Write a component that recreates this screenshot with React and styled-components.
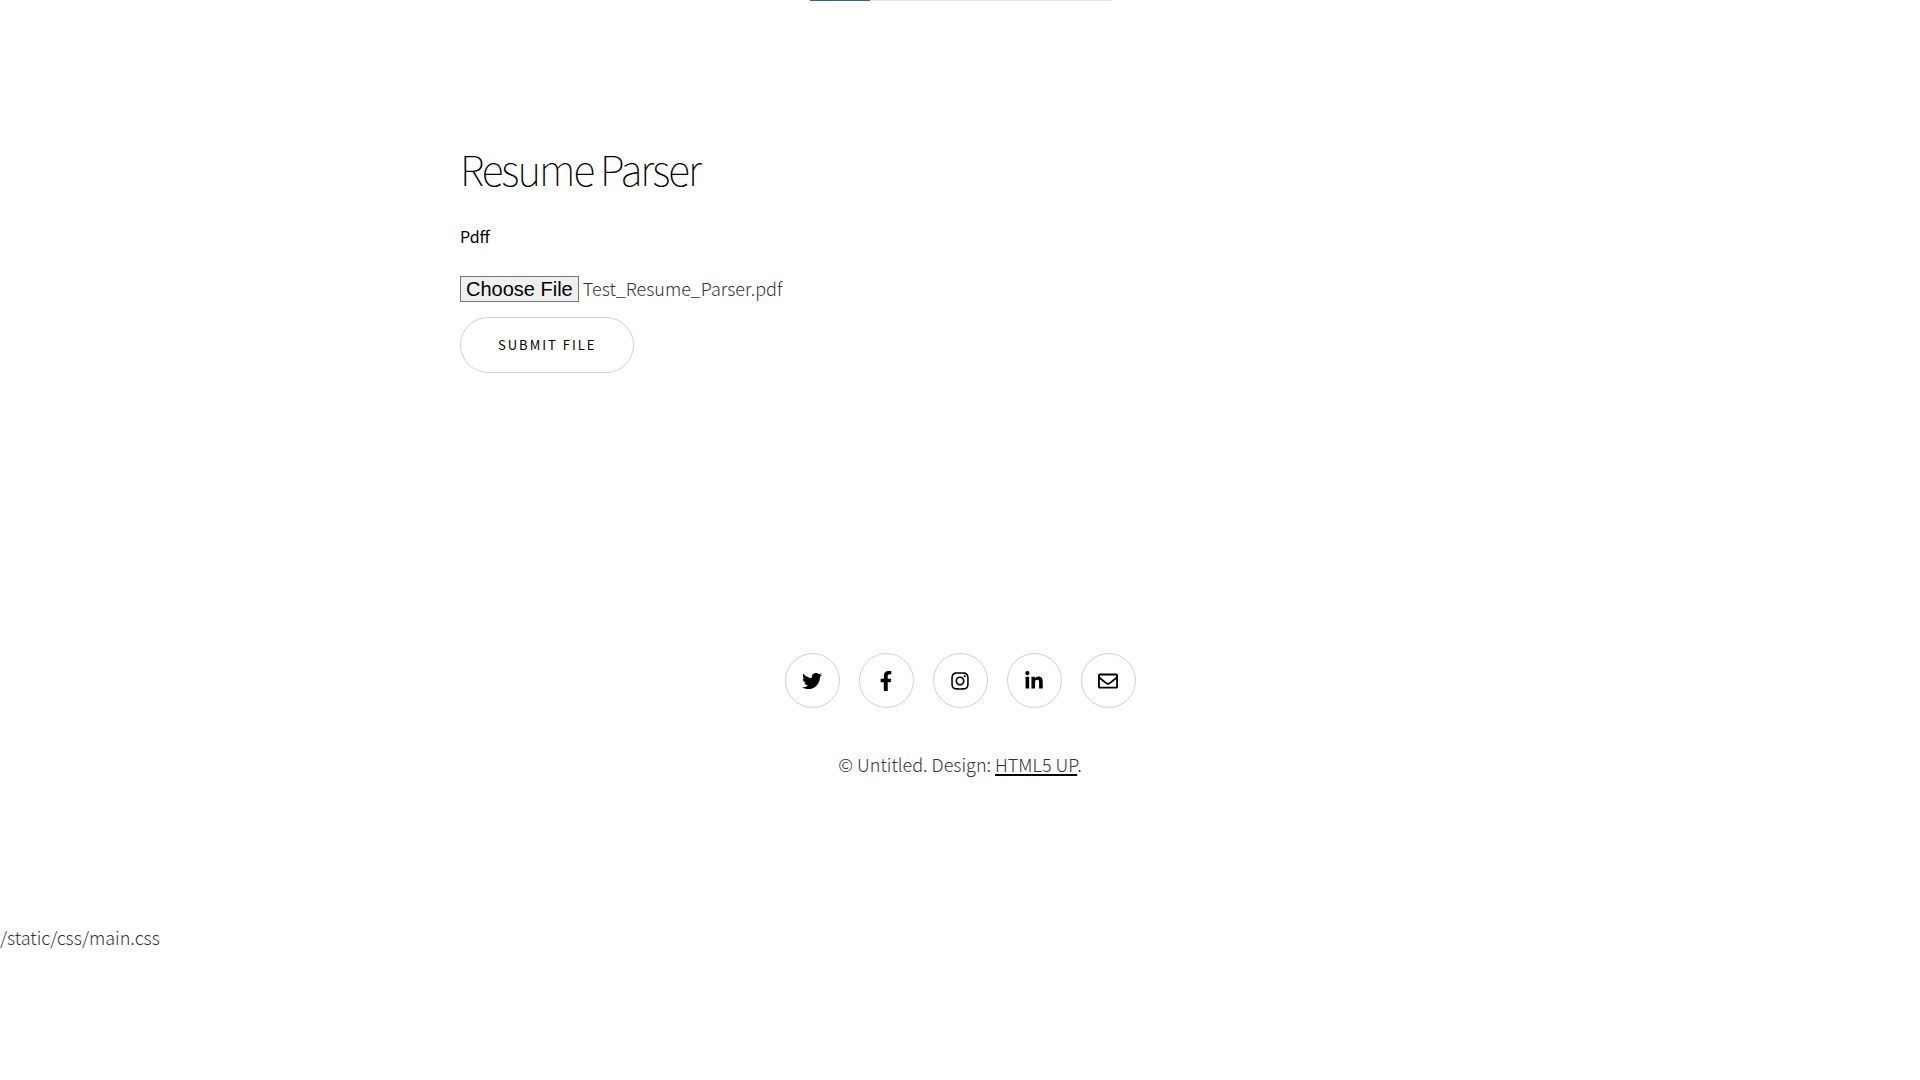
import React, { useEffect, useRef } from "react";
import styled, { createGlobalStyle } from "styled-components";
import { FaTwitter, FaFacebookF, FaInstagram, FaLinkedinIn, FaRegEnvelope } from "react-icons/fa";

const GlobalStyle = createGlobalStyle`
  *, *::before, *::after { box-sizing: border-box; }
  body {
    margin: 0;
    background: #fff;
    color: #333;
    font-family: "Noto Sans CJK SC", "Noto Sans", sans-serif;
    font-size: 18px;
    font-weight: 300;
    line-height: 34px;
  }
`;

const TabStrip = styled.div`
  display: flex;
  width: 301px;
  height: 1px;
  margin: 0 auto;
  background: #e4e4e4;
`;

const ActiveTab = styled.div`
  width: 60px;
  background: #2b6695;
`;

const Main = styled.main`
  width: min(1000px, 100%);
  margin: 0 auto;
  padding: 141px 0 140px;
`;

const Title = styled.h1`
  margin: 0 0 25px;
  color: #000;
  font-size: 41px;
  font-weight: 100;
  line-height: 52px;
  letter-spacing: -2px;
`;

const UploadForm = styled.form`
  display: flex;
  flex-direction: column;
  align-items: flex-start;
`;

const FieldLabel = styled.label`
  margin-bottom: 18px;
  color: #000;
  font-size: 16px;
  font-weight: 400;
  line-height: 34px;
`;

const FileField = styled.input`
  width: 400px;
  max-width: 100%;
  height: 34px;
  margin-bottom: 12px;
  color: #333;
  font: inherit;

  &::file-selector-button {
    height: 26px;
    margin: 0 4px 0 0;
    padding: 0 5px;
    border: 1px solid #767676;
    border-radius: 0;
    background: #efefef;
    color: #000;
    font: 400 20px/24px "Liberation Sans", Arial, sans-serif;
  }
`;

const SubmitButton = styled.button`
  height: 56px;
  padding: 0 37px;
  border: 1px solid #d0d0d0;
  border-radius: 28px;
  background: transparent;
  color: #000;
  font: 400 13px/54px "Noto Sans CJK SC", "Noto Sans", sans-serif;
  letter-spacing: 2px;
  text-transform: uppercase;
`;

const Footer = styled.footer`
  display: flex;
  flex-direction: column;
  align-items: center;
  gap: 39px;
  padding: 140px 0 139px;
`;

const SocialList = styled.ul`
  display: flex;
  gap: 19px;
  margin: 0;
  padding: 0;
  list-style: none;
`;

const SocialLink = styled.a`
  display: flex;
  align-items: center;
  justify-content: center;
  width: 55px;
  height: 55px;
  border: 1px solid #d0d0d0;
  border-radius: 50%;
  color: #000;
  font-size: 20px;
`;

const Copyright = styled.p`
  margin: 0;
`;

const CreditLink = styled.a`
  color: inherit;
  text-decoration: underline #000 2px;
  text-underline-offset: 2px;
  text-decoration-skip-ink: none;
`;

const socials = [
  { name: "Twitter", Icon: FaTwitter },
  { name: "Facebook", Icon: FaFacebookF },
  { name: "Instagram", Icon: FaInstagram },
  { name: "LinkedIn", Icon: FaLinkedinIn },
  { name: "Email", Icon: FaRegEnvelope },
];

export default function App() {
  const fileRef = useRef(null);

  useEffect(() => {
    const transfer = new DataTransfer();
    transfer.items.add(new File([""], "Test_Resume_Parser.pdf", { type: "application/pdf" }));
    fileRef.current.files = transfer.files;
  }, []);

  return (
    <>
      <GlobalStyle />
      <TabStrip>
        <ActiveTab />
      </TabStrip>
      <Main>
        <Title>Resume Parser</Title>
        <UploadForm onSubmit={(event) => event.preventDefault()}>
          <FieldLabel htmlFor="pdf">Pdff</FieldLabel>
          <FileField id="pdf" type="file" ref={fileRef} />
          <SubmitButton type="submit">Submit File</SubmitButton>
        </UploadForm>
      </Main>
      <Footer>
        <SocialList>
          {socials.map(({ name, Icon }) => (
            <li key={name}>
              <SocialLink href="#" aria-label={name}>
                <Icon />
              </SocialLink>
            </li>
          ))}
        </SocialList>
        <Copyright>
          © Untitled. Design: <CreditLink href="#">HTML5 UP</CreditLink>.
        </Copyright>
      </Footer>
      <div>/static/css/main.css</div>
    </>
  );
}
